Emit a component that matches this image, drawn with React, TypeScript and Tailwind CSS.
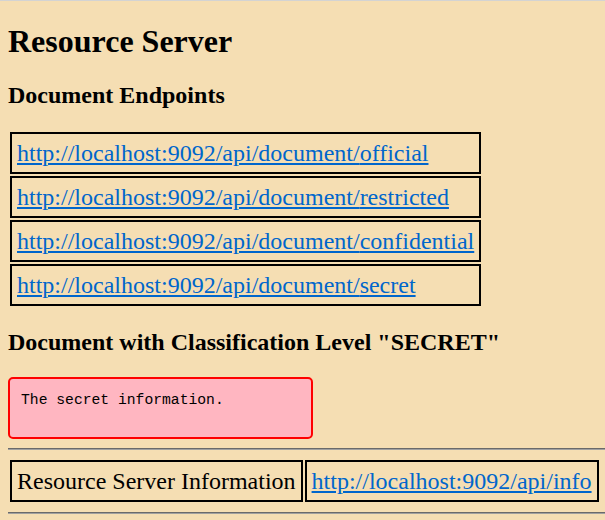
import React from 'react';

const endpoints = ['official', 'restricted', 'confidential', 'secret'];

const linkCls = 'text-[#0066cc] underline';
const cellCls = 'border-2 border-black p-[5px] text-[24px] leading-[28px] whitespace-nowrap';

export default function App() {
    return (
        <div className="min-h-screen bg-[#f5deb3] border-t border-[#d3d3d3] px-2 text-black font-['Liberation_Serif',_'Times_New_Roman',_serif]">
            <div className="flex flex-col">
                <h1 className="mt-[21.5px] text-[32px] leading-[37px] font-bold">Resource Server</h1>

                <h2 className="mt-[21.5px] text-[24px] leading-[28px] font-bold">Document Endpoints</h2>

                <table className="mt-[21px] self-start w-max border-separate border-spacing-0.5">
                    <tbody>
                        {endpoints.map((name) => (
                            <tr key={name}>
                                <td className={cellCls}>
                                    <a href="#" className={linkCls}>
                                        http://localhost:9092/api/document/{name}
                                    </a>
                                </td>
                            </tr>
                        ))}
                    </tbody>
                </table>

                <h2 className="mt-[20px] text-[24px] leading-[28px] font-bold">
                    Document with Classification Level "SECRET"
                </h2>

                <pre className="mt-[21px] self-start w-[305px] h-[62px] border-2 border-[#ff0000] rounded-[5px] bg-[#ffb6c1] pt-[12.5px] pl-[11px] text-[14.7px] leading-[17px] font-['Liberation_Mono',_'DejaVu_Sans_Mono',_monospace]">
                    The secret information.
                </pre>

                <hr className="mt-[9px] -mr-2 h-0 border-0 border-t border-t-[#6a6a6a] border-b border-b-[#a0a0a0]" />

                <table className="mt-2 self-start w-max border-separate border-spacing-0.5">
                    <tbody>
                        <tr>
                            <td className={cellCls}>Resource Server Information</td>
                            <td className={cellCls}>
                                <a href="#" className={linkCls}>
                                    http://localhost:9092/api/info
                                </a>
                            </td>
                        </tr>
                    </tbody>
                </table>

                <hr className="mt-2 -mr-2 h-0 border-0 border-t border-t-[#6a6a6a] border-b border-b-[#a0a0a0]" />
            </div>
        </div>
    );
}
